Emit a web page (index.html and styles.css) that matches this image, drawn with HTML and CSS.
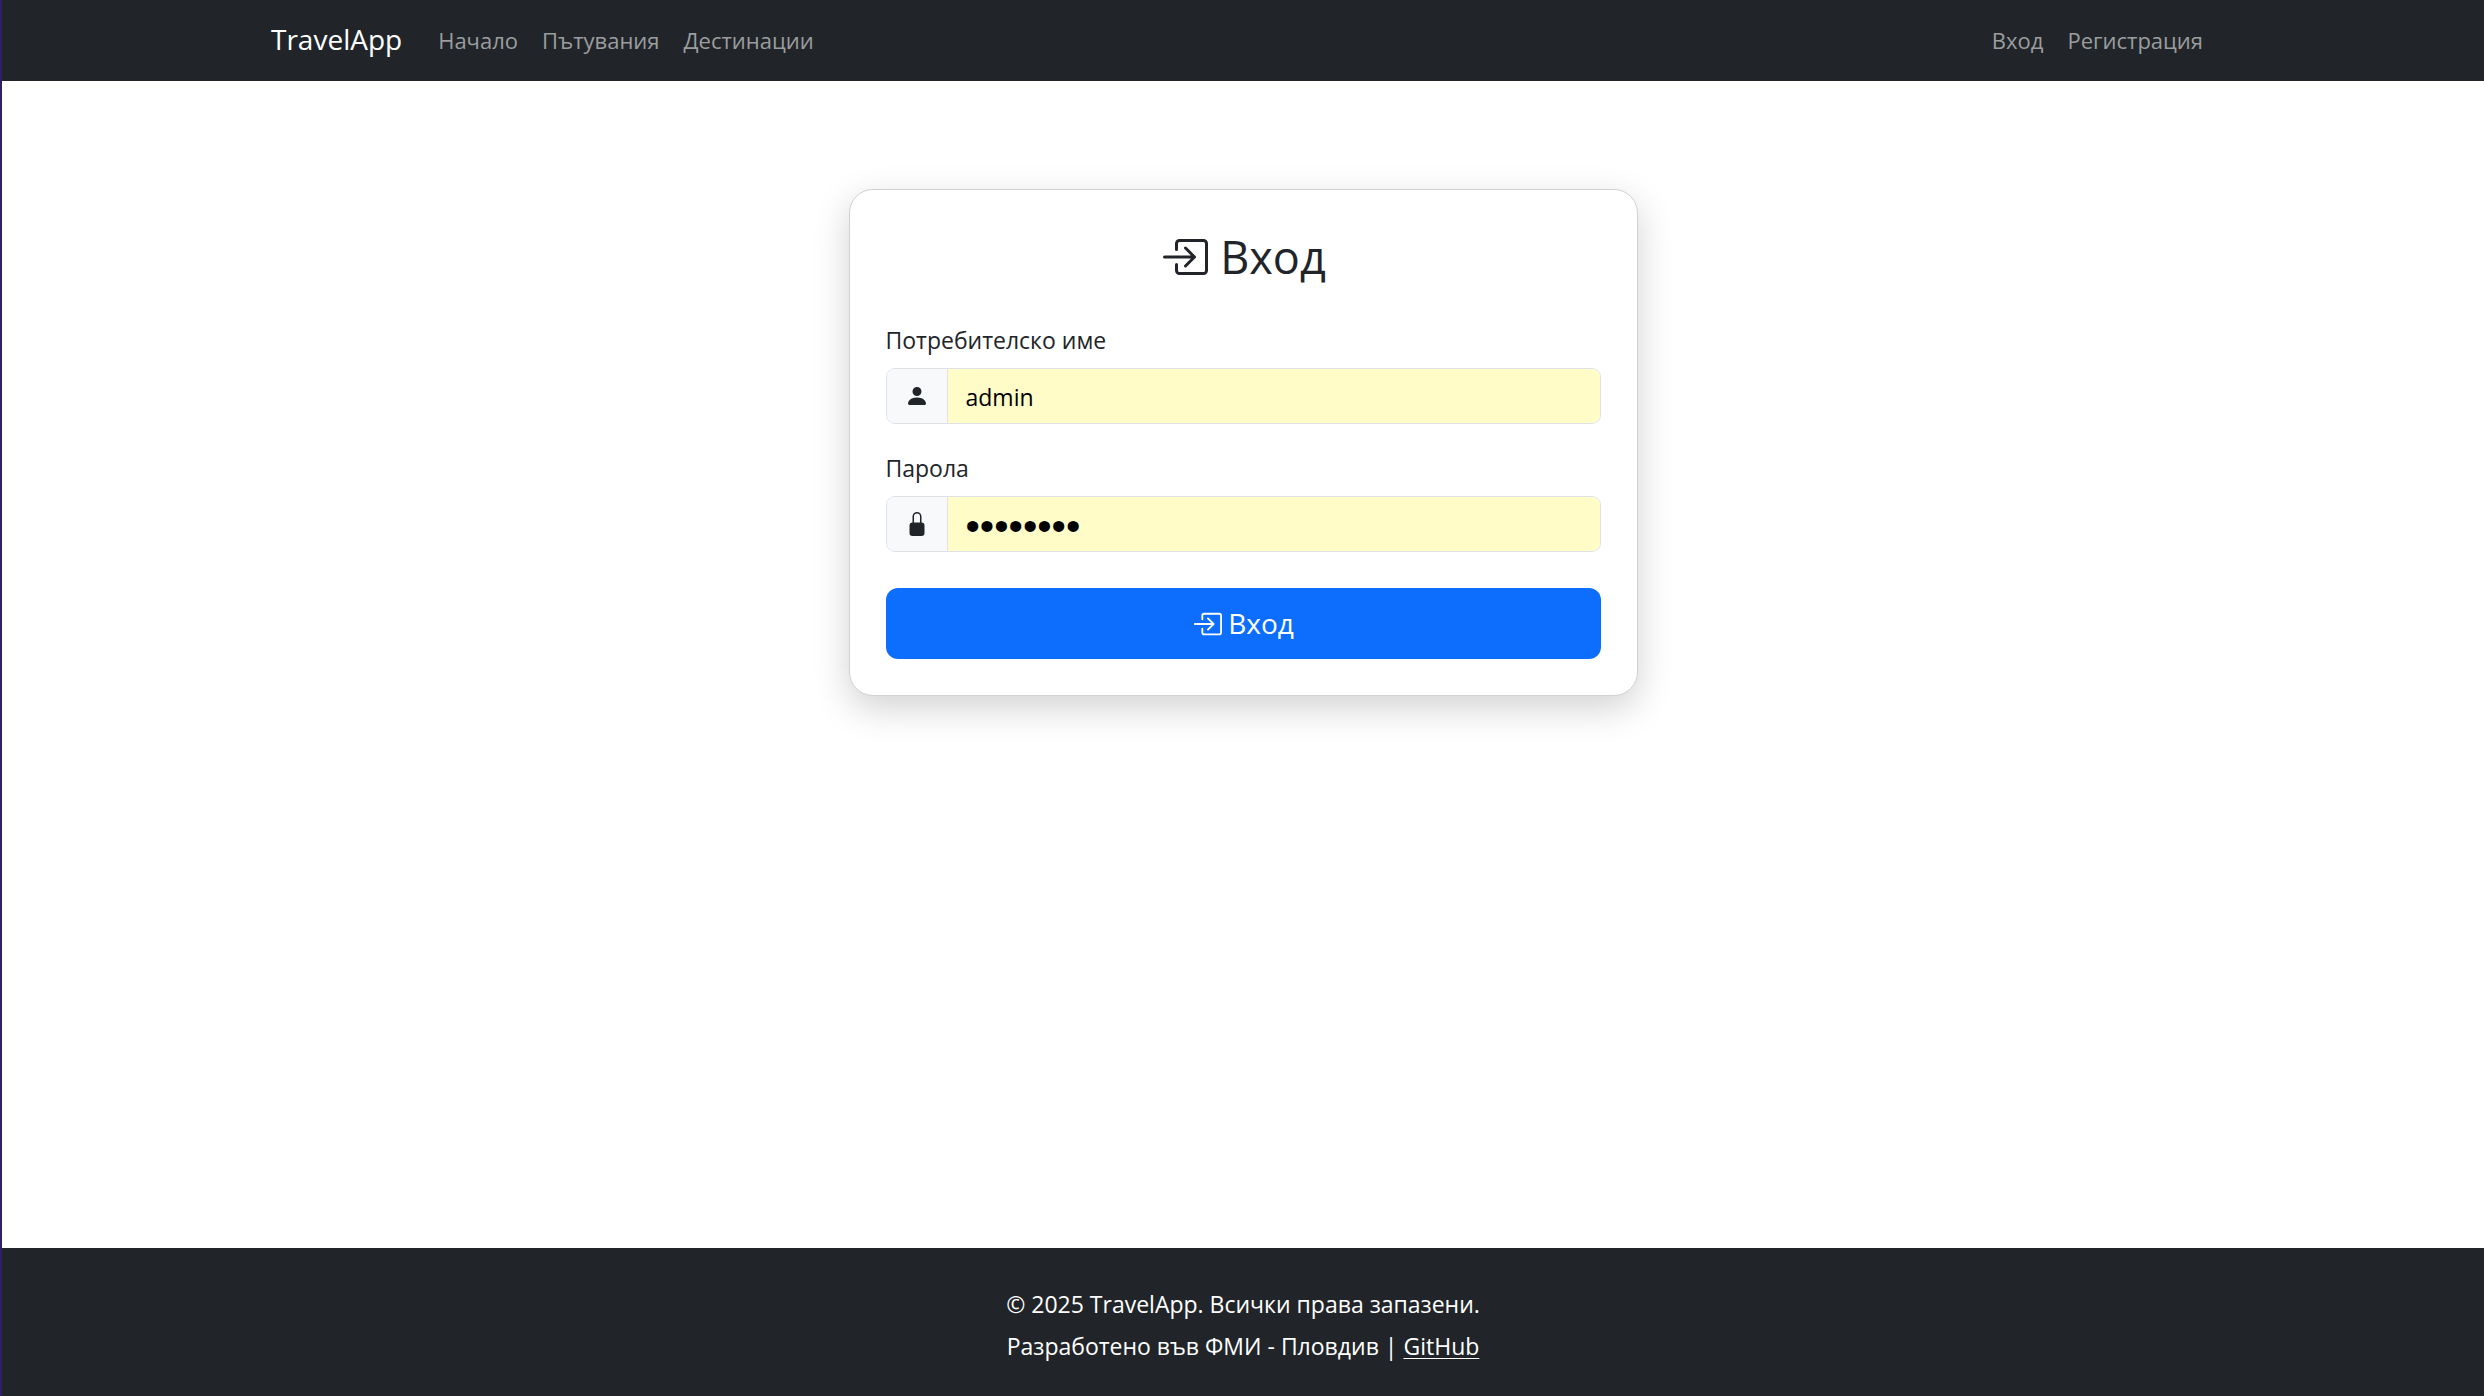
FILE: index.html
```html
<!DOCTYPE html>
<html lang="bg">
<head>
  <meta charset="utf-8">
  <meta name="viewport" content="width=device-width, initial-scale=1">
  <title>Вход - TravelApp</title>
  <link rel="stylesheet" href="styles.css">
</head>
<body>
  <svg class="sprite" aria-hidden="true">
    <symbol id="icon-enter" viewBox="0 0 16 16">
      <path fill-rule="evenodd" d="M6 3.5a.5.5 0 0 1 .5-.5h8a.5.5 0 0 1 .5.5v9a.5.5 0 0 1-.5.5h-8a.5.5 0 0 1-.5-.5v-2a.5.5 0 0 0-1 0v2A1.5 1.5 0 0 0 6.5 14h8a1.5 1.5 0 0 0 1.5-1.5v-9A1.5 1.5 0 0 0 14.5 2h-8A1.5 1.5 0 0 0 5 3.5v2a.5.5 0 0 0 1 0z"/>
      <path fill-rule="evenodd" d="M11.854 8.354a.5.5 0 0 0 0-.708l-3-3a.5.5 0 1 0-.708.708L10.293 7.5H1.5a.5.5 0 0 0 0 1h8.793l-2.147 2.146a.5.5 0 0 0 .708.708z"/>
    </symbol>
    <symbol id="icon-person" viewBox="0 0 16 16">
      <path d="M3 14s-1 0-1-1 1-4 6-4 6 3 6 4-1 1-1 1zm5-6a3 3 0 1 0 0-6 3 3 0 0 0 0 6"/>
    </symbol>
    <symbol id="icon-lock" viewBox="0 0 16 16">
      <path d="M8 1a2 2 0 0 1 2 2v4H6V3a2 2 0 0 1 2-2m3 6V3a3 3 0 0 0-6 0v4a2 2 0 0 0-2 2v5a2 2 0 0 0 2 2h6a2 2 0 0 0 2-2V9a2 2 0 0 0-2-2"/>
    </symbol>
  </svg>

  <header class="navbar">
    <nav class="container navbar-inner">
      <a class="brand" href="#">TravelApp</a>
      <ul class="nav-list">
        <li><a class="nav-link" href="#">Начало</a></li>
        <li><a class="nav-link" href="#">Пътувания</a></li>
        <li><a class="nav-link" href="#">Дестинации</a></li>
      </ul>
      <ul class="nav-list nav-list-end">
        <li><a class="nav-link" href="#">Вход</a></li>
        <li><a class="nav-link" href="#">Регистрация</a></li>
      </ul>
    </nav>
  </header>

  <main class="container main">
    <section class="card">
      <h1 class="card-title"><svg class="icon"><use href="#icon-enter"/></svg>Вход</h1>
      <form class="form">
        <div class="field">
          <label class="label" for="username">Потребителско име</label>
          <div class="input-group">
            <span class="addon"><svg class="icon"><use href="#icon-person"/></svg></span>
            <input class="input" id="username" name="username" type="text" value="admin">
          </div>
        </div>
        <div class="field">
          <label class="label" for="password">Парола</label>
          <div class="input-group">
            <span class="addon"><svg class="icon"><use href="#icon-lock"/></svg></span>
            <input class="input input-password" id="password" name="password" type="password" value="password">
          </div>
        </div>
        <button class="submit" type="submit"><svg class="icon"><use href="#icon-enter"/></svg>Вход</button>
      </form>
    </section>
  </main>

  <footer class="footer">
    <p class="footer-line">© 2025 TravelApp. Всички права запазени.</p>
    <p class="footer-line">Разработено във ФМИ - Пловдив | <a class="footer-link" href="#">GitHub</a></p>
  </footer>
</body>
</html>
```
FILE: styles.css
```css
*,
*::before,
*::after {
  box-sizing: border-box;
}

body {
  display: flex;
  flex-direction: column;
  min-height: 100vh;
  margin: 0;
  border-left: 2px solid #2e1f66;
  background: #fff;
  color: #212529;
  font-family: "Open Sans", "Noto Sans", sans-serif;
  font-size: 23px;
  line-height: 36px;
}

.sprite {
  display: none;
}

.icon {
  flex: none;
  width: 24px;
  height: 24px;
  fill: currentColor;
}

.container {
  width: 100%;
  max-width: 1980px;
  margin: 0 auto;
  padding: 0 18px;
}

.navbar {
  padding: 11px 0 13px;
  background: #212529;
}

.navbar-inner {
  display: flex;
  align-items: center;
}

.brand {
  margin-right: 24px;
  color: #fff;
  font-size: 28px;
  line-height: 57px;
  text-decoration: none;
}

.nav-list {
  display: flex;
  margin: 0;
  padding: 0;
  list-style: none;
}

.nav-list-end {
  margin-left: auto;
}

.nav-link {
  display: block;
  padding: 10px 12px;
  color: #9b9d9e;
  font-size: 22px;
  text-decoration: none;
}

.main {
  flex: 1;
  padding-top: 108px;
  padding-bottom: 72px;
}

.card {
  width: 100%;
  max-width: 789px;
  margin: 0 auto;
  padding: 38px 36px 36px;
  border: 1px solid #d0d1d2;
  border-radius: 24px;
  background: #fff;
  box-shadow: 0 12px 36px rgba(0, 0, 0, 0.18);
}

.card-title {
  display: flex;
  align-items: center;
  justify-content: center;
  gap: 12px;
  margin: 0 0 36px;
  font-size: 45px;
  font-weight: 400;
  line-height: 58px;
}

.card-title .icon {
  width: 48px;
  height: 48px;
}

.field {
  margin-bottom: 26px;
}

.field + .field {
  margin-bottom: 36px;
}

.label {
  display: block;
  margin-bottom: 10px;
}

.input-group {
  display: flex;
  height: 56px;
  overflow: hidden;
  border: 1px solid #dee2e6;
  border-radius: 9px;
}

.addon {
  display: flex;
  align-items: center;
  padding: 0 18px;
  border-right: 1px solid #dee2e6;
  background: #f8f9fa;
}

.input {
  flex: 1;
  min-width: 0;
  padding: 2px 18px 0;
  border: 0;
  outline: 0;
  background: #fffcc8;
  color: #000;
  font: inherit;
}

.input-password {
  padding-top: 4px;
  font-family: "Liberation Sans", sans-serif;
  font-size: 41px;
}

.submit {
  display: flex;
  align-items: center;
  justify-content: center;
  gap: 6px;
  width: 100%;
  padding: 13px 24px;
  border: 0;
  border-radius: 12px;
  background: #0d6efd;
  color: #fff;
  font: inherit;
  font-size: 28px;
  line-height: 45px;
}

.submit .icon {
  width: 30px;
  height: 30px;
}

.footer {
  display: flex;
  flex-direction: column;
  gap: 6px;
  padding: 38px 18px 32px;
  background: #212529;
  color: #fff;
  text-align: center;
}

.footer-line {
  margin: 0;
}

.footer-link {
  color: inherit;
  text-decoration-thickness: 1px;
  text-underline-offset: 3px;
}
```
